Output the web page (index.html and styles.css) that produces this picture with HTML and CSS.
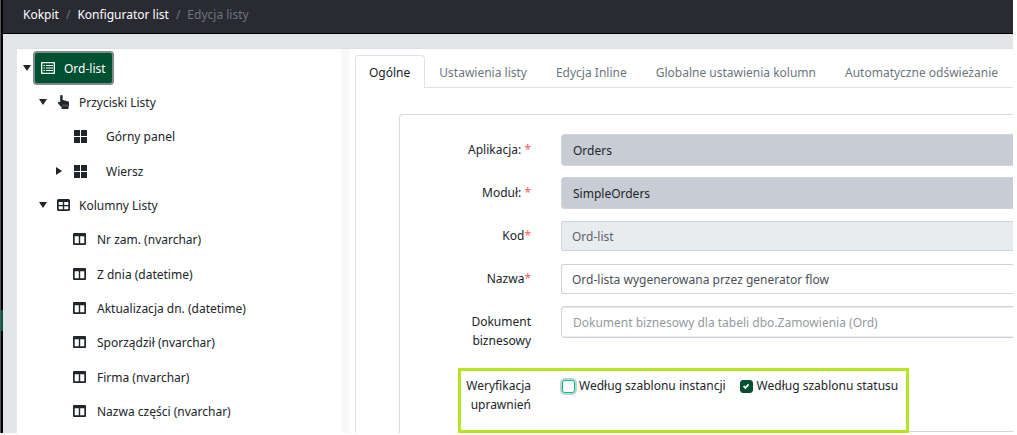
FILE: index.html
```html
<!DOCTYPE html>
<html lang="pl">
<head>
  <meta charset="UTF-8">
  <title>Konfigurator list</title>
  <link rel="stylesheet" href="styles.css">
</head>
<body>

<svg class="sprite" aria-hidden="true">
  <symbol id="i-list" viewBox="0 0 14 14">
    <path fill-rule="evenodd" d="M1 1h12a1 1 0 0 1 1 1v10a1 1 0 0 1-1 1H1a1 1 0 0 1-1-1V2a1 1 0 0 1 1-1zM1.300 2.300v9.400h11.400V2.300z" fill="currentColor"/>
    <path d="M2.500 4.500H4M5 4.500h7M2.500 7H4M5 7h7M2.500 9.500H4M5 9.500h7" stroke="currentColor" stroke-width="1.200"/>
  </symbol>
  <symbol id="i-hand" viewBox="0 0 14 14">
    <path d="M3.200 1.100a1.200 1.200 0 0 1 2.400 0V5.400c.5-.5 1.700-.4 2 .4.600-.5 1.700-.3 2 .5.800-.4 2.400 0 2.400 1.200v2.800c0 .7-.4 1.200-.5 1.900V14H4.700v-1.400C3.400 11.500 2.400 10 1.200 8.600.400 7.500 1.700 6.300 2.700 7l.5.500z" fill="currentColor"/>
    <path d="M6 9.500v2M8 9.500v2M10 9.500v2" stroke="#fff" stroke-width=".4"/>
  </symbol>
  <symbol id="i-tiles" viewBox="0 0 14 14">
    <path d="M1 1h6v6H1zM8 1h6v6H8zM1 8h6v6H1zM8 8h6v6H8z" fill="currentColor"/>
  </symbol>
  <symbol id="i-table" viewBox="0 0 14 14">
    <path fill-rule="evenodd" d="M1.500 1h10a1.500 1.500 0 0 1 1.500 1.500v9A1.500 1.500 0 0 1 11.500 13h-10A1.500 1.500 0 0 1 0 11.500v-9A1.500 1.500 0 0 1 1.500 1zM1.700 4v3h4.100V4zM7.200 4v3h4.100V4zM1.700 8.300v3h4.100v-3zM7.200 8.300v3h4.100v-3z" fill="currentColor"/>
  </symbol>
  <symbol id="i-columns" viewBox="0 0 14 14">
    <path fill-rule="evenodd" d="M1 1h11a1 1 0 0 1 1 1v10a1 1 0 0 1-1 1H1a1 1 0 0 1-1-1V2a1 1 0 0 1 1-1zM1.700 4.200v7.100h4.100V4.200zM7.200 4.200v7.100h4.100V4.200z" fill="currentColor"/>
  </symbol>
</svg>

<div class="app">
  <div class="rail"></div>
  <div class="page">
    <header class="topbar">
      <nav class="breadcrumb" aria-label="Nawigacja">
        <a href="#">Kokpit</a>
        <span class="sep">/</span>
        <a href="#">Konfigurator list</a>
        <span class="sep">/</span>
        <span class="current">Edycja listy</span>
      </nav>
    </header>

    <main class="workspace">
      <aside class="sidebar">
        <ul class="tree">
          <li class="node root">
            <span class="arrow down"></span>
            <button type="button" class="selected"><svg class="icon"><use href="#i-list"/></svg>Ord-list</button>
          </li>
          <li class="node level-1">
            <span class="arrow down"></span>
            <svg class="icon"><use href="#i-hand"/></svg><span>Przyciski Listy</span>
          </li>
          <li class="node level-2 panel">
            <span class="arrow"></span>
            <svg class="icon"><use href="#i-tiles"/></svg><span>Górny panel</span>
          </li>
          <li class="node level-2 panel">
            <span class="arrow right"></span>
            <svg class="icon"><use href="#i-tiles"/></svg><span>Wiersz</span>
          </li>
          <li class="node level-1">
            <span class="arrow down"></span>
            <svg class="icon"><use href="#i-table"/></svg><span>Kolumny Listy</span>
          </li>
          <li class="node level-2">
            <span class="arrow"></span>
            <svg class="icon"><use href="#i-columns"/></svg><span>Nr zam. (nvarchar)</span>
          </li>
          <li class="node level-2">
            <span class="arrow"></span>
            <svg class="icon"><use href="#i-columns"/></svg><span>Z dnia (datetime)</span>
          </li>
          <li class="node level-2">
            <span class="arrow"></span>
            <svg class="icon"><use href="#i-columns"/></svg><span>Aktualizacja dn. (datetime)</span>
          </li>
          <li class="node level-2">
            <span class="arrow"></span>
            <svg class="icon"><use href="#i-columns"/></svg><span>Sporządził (nvarchar)</span>
          </li>
          <li class="node level-2">
            <span class="arrow"></span>
            <svg class="icon"><use href="#i-columns"/></svg><span>Firma (nvarchar)</span>
          </li>
          <li class="node level-2">
            <span class="arrow"></span>
            <svg class="icon"><use href="#i-columns"/></svg><span>Nazwa części (nvarchar)</span>
          </li>
        </ul>
      </aside>

      <section class="content">
        <nav class="tabs">
          <a href="#" class="tab active">Ogólne</a>
          <a href="#" class="tab">Ustawienia listy</a>
          <a href="#" class="tab">Edycja Inline</a>
          <a href="#" class="tab">Globalne ustawienia kolumn</a>
          <a href="#" class="tab">Automatyczne odświeżanie</a>
        </nav>
        <div class="tab-body">
          <form class="card">
            <div class="row">
              <label for="app">Aplikacja: <span class="req">*</span></label>
              <input type="text" id="app" class="combo locked" value="Orders" readonly>
            </div>
            <div class="row">
              <label for="module">Moduł: <span class="req">*</span></label>
              <input type="text" id="module" class="combo locked" value="SimpleOrders" readonly>
            </div>
            <div class="row">
              <label for="code">Kod<span class="req">*</span></label>
              <input type="text" id="code" value="Ord-list" disabled>
            </div>
            <div class="row">
              <label for="name">Nazwa<span class="req">*</span></label>
              <input type="text" id="name" value="Ord-lista wygenerowana przez generator flow">
            </div>
            <div class="row">
              <label for="doc">Dokument biznesowy</label>
              <input type="text" id="doc" class="combo" placeholder="Dokument biznesowy dla tabeli dbo.Zamowienia (Ord)">
            </div>
            <div class="row permissions">
              <span class="row-title" id="perm">Weryfikacja uprawnień</span>
              <div class="checks" role="group" aria-labelledby="perm">
                <label class="check"><input type="checkbox" class="focused">Według szablonu instancji</label>
                <label class="check"><input type="checkbox" checked>Według szablonu statusu</label>
              </div>
            </div>
            <hr class="divider">
          </form>
        </div>
      </section>
    </main>
  </div>
</div>

</body>
</html>
```

FILE: styles.css
```css
* { box-sizing: border-box; }
body { margin: 0; padding: 0 4px 2px 0; height: 100vh; overflow: hidden; background: #fff; color: #212529; font: 12px/19px "Segoe UI", "Noto Sans", "Open Sans", sans-serif; }
a { color: inherit; text-decoration: none; }
.sprite { display: none; }

.app { height: 100%; overflow: hidden; display: flex; background: #e4e5e7; }
.rail { flex: none; width: 3px; padding-top: 310px; background: #000; border-left: 1px solid #55565a; }
.rail::before { content: ""; display: block; height: 21px; background: #005a3c; }
.page { flex: 1; min-width: 0; display: flex; flex-direction: column; }
.topbar { flex: none; height: 34px; background: #2a2a33; border-bottom: 1px solid #000; padding: 5px 20px; }
.breadcrumb { display: flex; gap: 7px; color: #fff; }
.sep, .current { color: #6c757d; }

.workspace { flex: 1; min-height: 0; display: flex; margin: 14px 0 0 14px; background: #fff; border-top: 1px solid #dcdfe6; }

.sidebar { flex: 0 0 332px; overflow: hidden; border-right: 8px solid #f8f8f8; }
.tree { list-style: none; margin: 0; padding: 2px 4px; }
.node { display: flex; align-items: center; height: 34px; }
.node:nth-child(3n) { margin-bottom: 1px; }
.level-1 { padding-left: 16px; }
.level-2 { padding-left: 32px; }
.node > .icon { margin-left: 8px; }
.node .icon + span { margin-left: 10px; }
.level-1 .icon + span { margin-left: 8px; }
.panel .icon + span { margin-left: 19px; }
.arrow { flex: none; width: 12px; display: flex; justify-content: center; }
.arrow.down::before { content: ""; border: 4px solid transparent; border-top: 6px solid #212529; border-bottom: 0; }
.arrow.right::before { content: ""; border: 4px solid transparent; border-left: 6px solid #212529; border-right: 0; }
.icon { flex: none; width: 14px; height: 14px; }
.selected { display: flex; align-items: center; height: 34px; padding: 0 6px; border: 2px solid #82898a; border-radius: 4px; background: #005032; color: #fff; font: inherit; }
.selected .icon { margin-right: 9px; }

.content { flex: 1; min-width: 0; padding: 6px 0 0 6px; display: flex; flex-direction: column; }
.tabs { display: flex; flex: none; border-bottom: 1px solid #dee2e6; white-space: nowrap; }
.tab { padding: 7px 14px 6px 13px; color: #6c757d; border: 1px solid transparent; border-bottom: 0; margin-bottom: -1px; }
.tab.active { color: #212529; background: #fff; border-color: #dee2e6; border-radius: 4px 4px 0 0; }
.tab-body { flex: 1; border-left: 1px solid #dee2e6; padding: 26px 0 0 43px; }
.card { border: 1px solid #d8dbde; border-right: 0; border-radius: 4px 0 0 0; padding: 19px 0 0 58px; height: 340px; }
.row { display: flex; align-items: flex-start; height: 43px; }
.row > label, .row-title { flex: none; width: 73px; margin-right: 30px; padding-top: 6px; text-align: right; }
.req { color: #ff5c5c; }
input[type=text] { flex: 1; min-width: 0; height: 30px; margin: 1px 0; padding: 0 10px; border: 1px solid #ced4da; border-right: 0; border-radius: 3px 0 0 3px; background: #fff; color: #495057; font: inherit; }
input[type=text].combo { height: 32px; margin: 0; padding: 0 11px; border-radius: 4px 0 0 4px; box-shadow: inset 0 1px #e6eaed, inset 0 -1px #eceff1; }
input[type=text].locked { background: #c8ccd4; color: #212529; box-shadow: none; }
input[type=text]:disabled { background: #e9ecef; color: #5c6268; }
input::placeholder { color: #949a9f; }

.permissions { position: relative; width: 451px; height: 65px; margin: 19px 0 -2px; border: 3px solid #b5e61d; }
.permissions .row-title { width: 70px; padding-top: 5px; }
.checks { display: flex; gap: 14px; padding: 5px 0 0 1px; }
.check { display: flex; align-items: center; gap: 4px; white-space: nowrap; }
.check input { appearance: none; flex: none; width: 13px; height: 13px; margin: 1px 0 0; border: 1px solid #005032; border-radius: 3px; background: #fff; }
.check input:checked { background: #005032 url("data:image/svg+xml,%3Csvg xmlns='http://www.w3.org/2000/svg' viewBox='0 0 13 13'%3E%3Cpath d='M3 6l2.200 2.200L9 4' fill='none' stroke='%23fff' stroke-width='2'/%3E%3C/svg%3E") center; }
.check input.focused { border-color: #00c281; box-shadow: 0 0 0 2px #bfd3cc; }
.divider { margin: 0; border: 0; border-top: 1px solid #d3d5d8; }
```
